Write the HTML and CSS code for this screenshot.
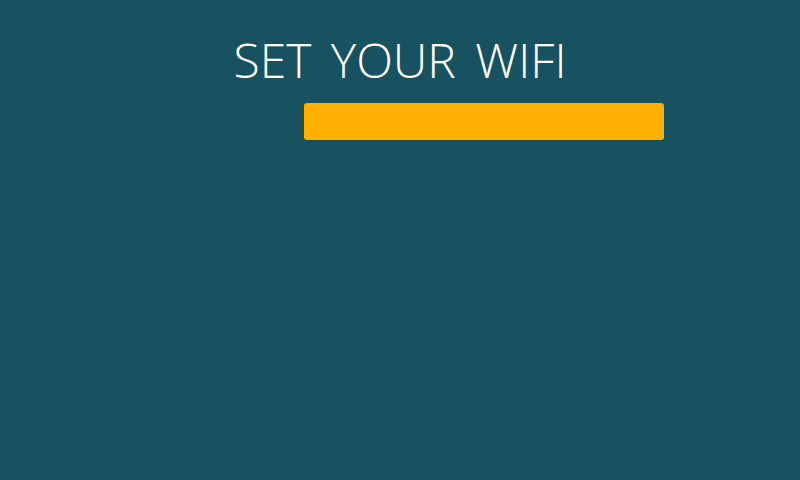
FILE: index.html
```html
<!DOCTYPE html>
<html>
<head>
<meta charset="utf-8">
<link rel="stylesheet" href="styles.css">
</head>
<body>
<div class="screen">
  <h1 class="title">SET YOUR WIFI</h1>
  <div class="bar-row"><div class="bar"></div></div>
</div>
</body>
</html>
```
FILE: styles.css
```css
html, body { margin: 0; padding: 0; }
body { background: #185260; width: 800px; height: 480px; overflow: hidden; }
.screen { display: flex; flex-direction: column; padding-top: 28px; }
.title {
  margin: 0;
  font-family: "Open Sans", sans-serif;
  font-weight: 300;
  font-size: 48px;
  line-height: 64px;
  color: #ffffff;
  text-align: center;
  word-spacing: 7px;
}
.bar-row { padding-left: 304px; margin-top: 11px; }
.bar { width: 360px; height: 37px; background: #ffb000; border-radius: 3px; }
```
